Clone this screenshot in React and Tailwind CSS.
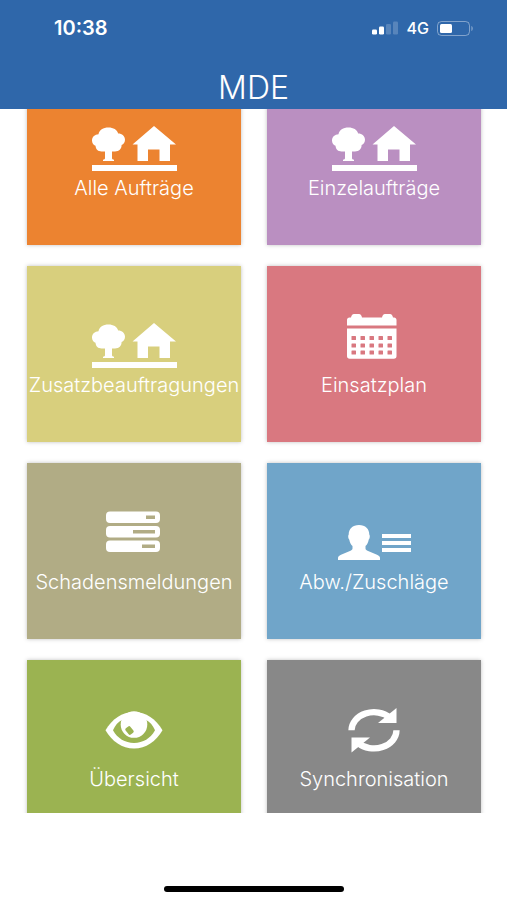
import React from 'react';

function PropertyIcon() {
    return (
        <svg width="90" height="60" viewBox="0 0 90 60" fill="currentColor" aria-hidden="true">
            <path d="M19.500 11.500c4.800 0 8.700 2.300 9.700 6 3.800 0 6.800 2.600 6.800 6.200 0 2.600-1.300 4.500-3.400 5.400 0 4.200-2.600 6.400-6.600 6.400H23V42c0 1.200.6 1.600 2 1.800V45H14v-1.200c1.400-.2 2-.6 2-1.800v-6.500h-3.500c-3.400 0-5.700-2-6-5.700C4.300 29 3 27 3 24.500c0-3.600 2.800-6.100 6.500-6.300.6-4.200 4.700-6.700 10-6.700z" />
            <path d="M65 10l22 18.500h-6V45H70.500V33.500H59V45H48.500V28.500h-5z" />
            <rect x="3" y="49" width="85" height="6" />
        </svg>
    );
}

function CalendarIcon({ hole }) {
    const columns = [22.5, 31.5, 40.5, 49.5, 58.5];
    const rows = [23, 30.5, 37.5];
    return (
        <svg width="90" height="60" viewBox="0 0 90 60" fill="currentColor" aria-hidden="true">
            <path d="M18 12.500V7c0-1.500 1-2.500 2.500-2.500H22c.5-2 1.300-3.500 3-3.500h5c1.700 0 2.500 1.500 3 3.500h20c.5-2 1.300-3.500 3-3.500h5c1.700 0 2.500 1.500 3 3.500h1c1.500 0 2.500 1 2.500 2.500v5.500z" />
            <path d="M18 15.500h49.500V43c0 1.700-1 2.700-2.700 2.700H20.700c-1.700 0-2.700-1-2.700-2.700z" />
            {rows.map(y => columns.map(x => (
                <rect key={`${x}-${y}`} x={x} y={y} width="4.5" height="4" rx="0.5" fill={hole} />
            )))}
        </svg>
    );
}

function ServerIcon({ hole }) {
    return (
        <svg width="90" height="60" viewBox="0 0 90 60" fill="currentColor" aria-hidden="true">
            <rect x="17" y="1.5" width="54" height="11.5" rx="4" />
            <rect x="17" y="16" width="54" height="11.5" rx="4" />
            <rect x="17" y="30.5" width="54" height="11.5" rx="4" />
            <g fill={hole}>
                <rect x="57" y="5.5" width="9" height="3.5" />
                <rect x="44" y="20" width="22" height="3.5" />
                <rect x="53" y="34.5" width="13" height="3.5" />
            </g>
        </svg>
    );
}

function PersonIcon() {
    return (
        <svg width="90" height="60" viewBox="0 0 90 60" fill="currentColor" aria-hidden="true">
            <path d="M30 15c6.500 0 10.300 4 10.300 9.500.8.8.7 4-.6 5.200-.5 3-1.700 5-3.200 6.300v2.500c0 1 .8 1.800 2 2.300l9.500 4c2 .9 3 1.800 3 3.200v2H9v-2c0-1.400 1-2.300 3-3.200l9.500-4c1.200-.5 2-1.300 2-2.300V36c-1.500-1.300-2.700-3.300-3.200-6.300-1.300-1.200-1.400-4.400-.6-5.200C19.700 19 23.500 15 30 15z" />
            <rect x="53" y="24" width="29" height="4" />
            <rect x="53" y="31" width="29" height="4" />
            <rect x="53" y="38" width="29" height="4" />
        </svg>
    );
}

function EyeIcon({ hole }) {
    return (
        <svg width="90" height="60" viewBox="0 0 90 60" fill="currentColor" aria-hidden="true">
            <path d="M16.500 23.300C23 12 33 5 45 5s22 7 28.500 18.300C67 34.500 57 41.500 45 41.500S23 34.500 16.500 23.300z" />
            <path d="M24 23.300C26 18.500 29 15 33 13h24c4 2 7 5.500 9 10.300C61.500 31.500 54 36 45 36s-16.500-4.500-21-12.700z" fill={hole} />
            <circle cx="45" cy="17.500" r="13.300" />
            <rect x="37.500" y="19.500" width="6" height="8" rx="1.500" transform="rotate(-38 40.5 23.5)" fill={hole} />
        </svg>
    );
}

function SyncIcon() {
    return (
        <svg width="90" height="60" viewBox="0 0 90 60" fill="currentColor" aria-hidden="true">
            <path d="M22.500 23.300A22.500 18.200 0 0 1 61 10.600" fill="none" stroke="currentColor" strokeWidth="6.3" />
            <path d="M67.500 1v15H49z" />
            <path d="M67.500 23.300A22.500 18.200 0 0 1 29 36" fill="none" stroke="currentColor" strokeWidth="6.3" />
            <path d="M22.500 45.600v-15H41z" />
        </svg>
    );
}

const tiles = [
    { label: 'Alle Aufträge', color: 'bg-[#ec8330]', icon: <PropertyIcon /> },
    { label: 'Einzelaufträge', color: 'bg-[#ba8fc1]', icon: <PropertyIcon /> },
    { label: 'Zusatzbeauftragungen', color: 'bg-[#d8cf7d]', icon: <PropertyIcon /> },
    { label: 'Einsatzplan', color: 'bg-[#d97880]', icon: <CalendarIcon hole="#d97880" /> },
    { label: 'Schadensmeldungen', color: 'bg-[#b1ac85]', icon: <ServerIcon hole="#b1ac85" /> },
    { label: 'Abw./Zuschläge', color: 'bg-[#70a5c9]', icon: <PersonIcon /> },
    { label: 'Übersicht', color: 'bg-[#9bb351]', icon: <EyeIcon hole="#9bb351" /> },
    { label: 'Synchronisation', color: 'bg-[#888888]', icon: <SyncIcon /> },
];

function StatusBar() {
    return (
        <div className="flex h-14 items-center justify-between pl-[54px] pr-[33px]">
            <span className="text-xl font-semibold">10:38</span>
            <div className="flex items-center gap-2">
                <svg width="27" height="14" viewBox="0 0 27 14" fill="currentColor" aria-hidden="true">
                    <rect x="0" y="8.5" width="5" height="5" rx="1.2" />
                    <rect x="7" y="5.5" width="5" height="8" rx="1.2" />
                    <rect x="14" y="3" width="5" height="10.5" rx="1.2" opacity="0.2" />
                    <rect x="21" y="0.5" width="5" height="13" rx="1.2" opacity="0.2" />
                </svg>
                <span className="text-base font-medium">4G</span>
                <svg width="37" height="15" viewBox="0 0 37 15" aria-hidden="true">
                    <rect x="0.5" y="0.5" width="32" height="14" rx="4" fill="none" stroke="currentColor" opacity="0.4" />
                    <rect x="3" y="3" width="12" height="9" rx="1.5" fill="currentColor" />
                    <path d="M34.500 5c1.500.5 1.500 4.500 0 5z" fill="currentColor" opacity="0.5" />
                </svg>
            </div>
        </div>
    );
}

function App() {
    return (
        <div className="flex h-screen flex-col bg-white font-['Inter','Liberation_Sans',sans-serif] text-white">
            <header className="h-[109px] shrink-0 bg-[#2f67aa]">
                <StatusBar />
                <h1 className="pt-3 text-center text-[32px] leading-10 font-light">MDE</h1>
            </header>

            {/* the menu is scrolled down a little, so the first row is cut off by the header */}
            <main className="min-h-0 flex-1 overflow-hidden">
                <nav className="-mt-10 grid grid-cols-2 gap-x-[26px] gap-y-[21px] pr-[26px] pl-[27px]">
                    {tiles.map(tile => (
                        <button
                            key={tile.label}
                            type="button"
                            className={`flex h-44 flex-col items-center pt-[47px] shadow-[0_0_4px_rgba(0,0,0,0.25)] ${tile.color}`}
                        >
                            {tile.icon}
                            <span className="text-xl leading-6 font-light whitespace-nowrap">{tile.label}</span>
                        </button>
                    ))}
                </nav>
            </main>

            <footer className="flex h-[87px] shrink-0 items-end justify-center pb-2">
                <div className="h-[6px] w-[180px] rounded-full bg-black" />
            </footer>
        </div>
    );
}

export default App;
